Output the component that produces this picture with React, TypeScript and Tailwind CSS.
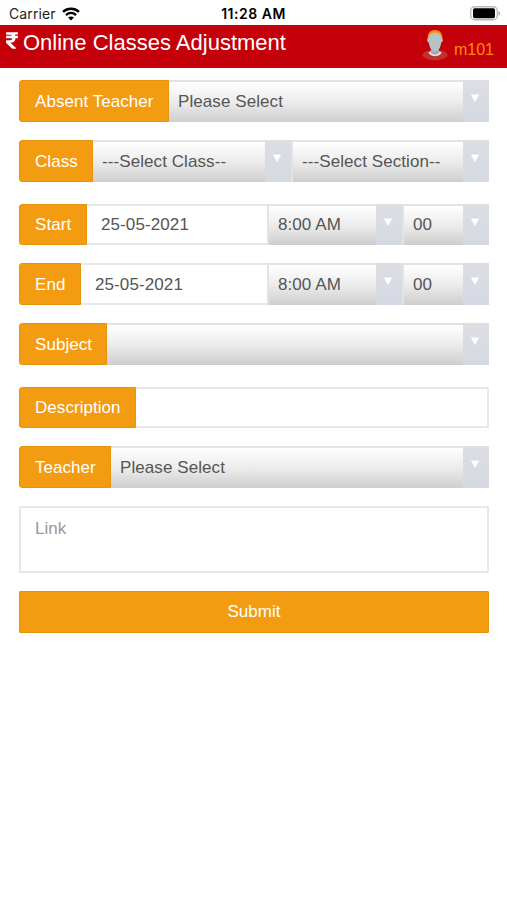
import React from 'react'
import { FaRupeeSign } from 'react-icons/fa'

export default function App() {
  return (
    <div className="h-[900px] w-[507px] overflow-hidden bg-white font-['Liberation_Sans',Arial,sans-serif] text-[17px] text-[#555]">
      <StatusBar />
      <Header />
      <form className="flex flex-col pt-[12.3px] pr-[18px] pl-[19px]" onSubmit={(e) => e.preventDefault()}>
        <Row className="mb-[18px]">
          <Label text="Absent Teacher" width="w-[150px]" />
          <Select value="Please Select" className="flex-1" />
        </Row>
        <Row className="mb-[22px]">
          <Label text="Class" width="w-[74px]" />
          <Select value="---Select Class--" className="w-[198px]" />
          <Select value="---Select Section--" className="flex-1" bordered />
        </Row>
        <Row className="mb-[18px]">
          <Label text="Start" width="w-[68px]" />
          <DateField value="25-05-2021" />
          <Select value="8:00 AM" className="w-[135px]" bordered />
          <Select value="00" className="w-[87px]" bordered />
        </Row>
        <Row className="mb-[18px]">
          <Label text="End" width="w-[62px]" />
          <DateField value="25-05-2021" />
          <Select value="8:00 AM" className="w-[135px]" bordered />
          <Select value="00" className="w-[87px]" bordered />
        </Row>
        <Row className="mb-[22px]">
          <Label text="Subject" width="w-[88px]" />
          <Select value="" className="flex-1" />
        </Row>
        <Row className="mb-[18px]">
          <Label text="Description" width="w-[117px]" />
          <div className="flex-1 border-2 border-l-0 border-[#e6e8ea]" />
        </Row>
        <Row className="mb-[18px]">
          <Label text="Teacher" width="w-[92px]" />
          <Select value="Please Select" className="flex-1" />
        </Row>
        <div className="mb-[17.6px] h-[67px] border-2 border-[#e6e8ea] px-[14px] pt-[9.5px] leading-[22px] text-[#999]">Link</div>
        <button className="h-[42px] rounded-[1px] border border-[#e8930c] bg-[#f39c12] pt-px text-center text-white">Submit</button>
      </form>
    </div>
  )
}

function StatusBar() {
  return (
    <div className="grid h-[25px] grid-cols-3 items-center pt-[2px] font-['Inter',sans-serif] text-[14px] text-[#222]">
      <div className="flex items-center gap-[6px] pl-[9px]">
        <span className="w-[47px] tracking-[0.1px]">Carrier</span>
        <svg width="18" height="14" viewBox="0 0 18 14" fill="none" stroke="#000">
          <path d="M1 4.9C5.5.7 12.5.7 17 4.9" strokeWidth="2.5" />
          <path d="M3.9 8.1c3-2.8 7.2-2.8 10.2 0" strokeWidth="2.3" />
          <path d="M9 13.6l-2.9-3c1.6-1.5 4.2-1.5 5.8 0z" fill="#000" stroke="none" />
        </svg>
      </div>
      <div className="text-center font-semibold tracking-[0.5px] text-black">11:28 AM</div>
      <div className="flex justify-end pr-[6px]">
        <svg width="31" height="15" viewBox="0 0 31 15">
          <rect x="0.7" y="0.7" width="26.6" height="13.1" rx="4" fill="#fff" stroke="#bbb" strokeWidth="1.4" />
          <rect x="3" y="2.3" width="22" height="10" rx="1.8" fill="#000" />
          <path d="M28.5 5c2.200.8 2.200 3.900 0 4.700z" fill="#aaa" />
        </svg>
      </div>
    </div>
  )
}

function Header() {
  return (
    <header className="flex h-[43px] items-start bg-[#c4000a] text-white">
      <FaRupeeSign className="mt-[6px] ml-[5px] h-[19px] w-[14px]" />
      <h1 className="ml-[4px] flex-1 text-[22px] leading-[35px] whitespace-nowrap">Online Classes Adjustment</h1>
      <Avatar />
      <span className="mt-[14px] mr-[13px] ml-[6px] text-[16px] leading-[22px] text-[#ff8c0a]">m101</span>
    </header>
  )
}

function Avatar() {
  return (
    <svg className="mt-1" width="26" height="32" viewBox="0 0 26 32">
      <ellipse cx="13" cy="26" rx="12.5" ry="5.2" fill="#c4302d" />
      <path d="M6.5 23C8 21.5 18 21.500 19.500 23c-.5 5.500-12.500 5.500-13 0z" fill="#e5e8e9" />
      <path d="M9 18h8v6q-4 3.500-8 0z" fill="#9eabb2" />
      <path d="M5.500 10C5.500 4 8.500 1 13 1s7.500 3 7.500 9z" fill="#f79308" />
      <path d="M6.500 9.500C6.500 6 9 3.800 13 3.800s6.500 2.200 6.500 5.700c2-.3 1.800 3.500-.3 4C18.800 18.500 16.200 22.500 13 22.500s-5.800-4-6.200-9c-2.100-.5-2.300-4.300-.3-4z" fill="#b8c3c8" />
    </svg>
  )
}

function Row({ children, className }: { children: React.ReactNode, className: string }) {
  return <div className={`flex h-[41.7px] ${className}`}>{children}</div>
}

function Label({ text, width }: { text: string, width: string }) {
  return (
    <div className={`${width} flex shrink-0 items-center rounded-l-[3px] border border-[#e8930c] bg-[#f39c12] pt-px pl-[15px] tracking-[0.05px] whitespace-nowrap text-white`}>
      {text}
    </div>
  )
}

function DateField({ value }: { value: string }) {
  return (
    <div className="flex flex-1 items-center border-y-2 border-[#e6e8ea] pt-px pl-[14px] tracking-[0.1px]">
      {value}
    </div>
  )
}

type SelectProps = { value: string, className: string, bordered?: boolean }

function Select({ value, className, bordered }: SelectProps) {
  return (
    <div className={`${className} flex border-t-2 border-[#e1e3e5] ${bordered ? 'border-l-2' : ''}`}>
      <div className="flex flex-1 items-center bg-linear-to-b from-white via-[#ececec] to-[#cecece] pb-[1px] pl-[9px] tracking-[0.08px] whitespace-nowrap">
        {value}
      </div>
      <div className="-mt-[2px] flex w-[26px] bg-linear-to-b from-[#dcdee2] to-[#d5d9e3] pt-[14px] pl-[7px]">
        <svg width="10" height="9" viewBox="0 0 10 9">
          <path d="M.8 .5h8.400L5 8z" fill="#fff" />
        </svg>
      </div>
    </div>
  )
}
